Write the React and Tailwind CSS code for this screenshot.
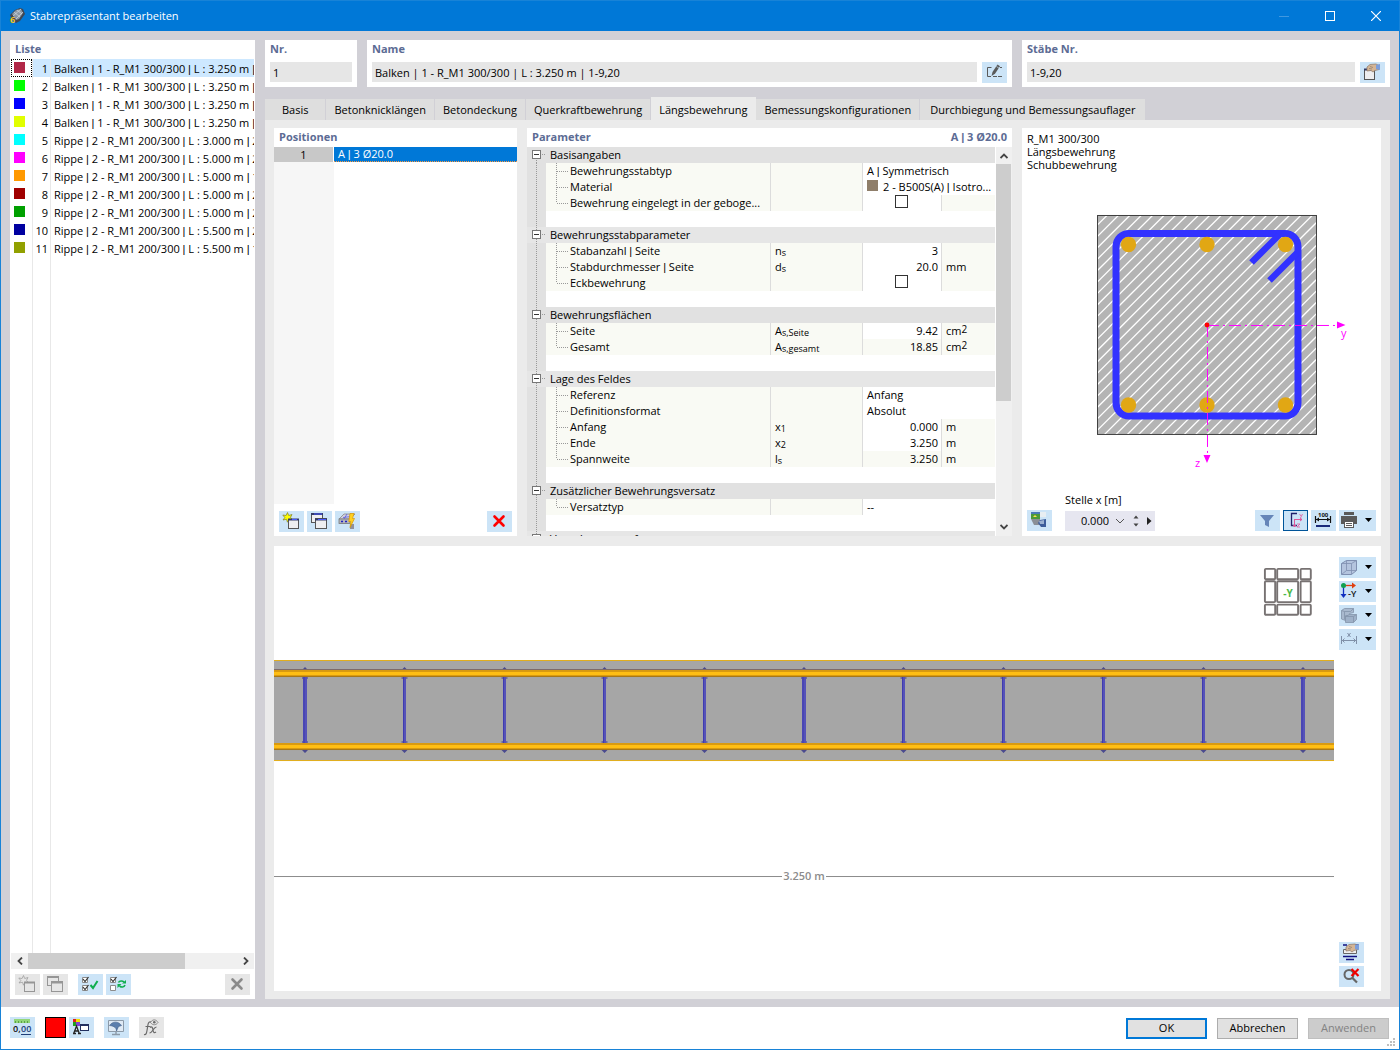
import clsx from 'clsx';

const listItems = [
  { nr: 1, color: '#b22748', text: 'Balken | 1 - R_M1 300/300 | L : 3.250 m | 1-9,20', active: true },
  { nr: 2, color: '#00ff00', text: 'Balken | 1 - R_M1 300/300 | L : 3.250 m | 10' },
  { nr: 3, color: '#0000ff', text: 'Balken | 1 - R_M1 300/300 | L : 3.250 m | 11' },
  { nr: 4, color: '#e1ff00', text: 'Balken | 1 - R_M1 300/300 | L : 3.250 m | 12' },
  { nr: 5, color: '#00ffff', text: 'Rippe | 2 - R_M1 200/300 | L : 3.000 m | 21' },
  { nr: 6, color: '#ff00ff', text: 'Rippe | 2 - R_M1 200/300 | L : 5.000 m | 22' },
  { nr: 7, color: '#ff9900', text: 'Rippe | 2 - R_M1 200/300 | L : 5.000 m | 13' },
  { nr: 8, color: '#a00000', text: 'Rippe | 2 - R_M1 200/300 | L : 5.000 m | 23' },
  { nr: 9, color: '#00a000', text: 'Rippe | 2 - R_M1 200/300 | L : 5.000 m | 24' },
  { nr: 10, color: '#0000a0', text: 'Rippe | 2 - R_M1 200/300 | L : 5.500 m | 25' },
  { nr: 11, color: '#91a000', text: 'Rippe | 2 - R_M1 200/300 | L : 5.500 m | 14' },
];

const tabs = [
  { name: 'Basis', className: 'px-[17px]' },
  { name: 'Betonknicklängen' },
  { name: 'Betondeckung' },
  { name: 'Querkraftbewehrung' },
  { name: 'Längsbewehrung', active: true },
  { name: 'Bemessungskonfigurationen' },
  { name: 'Durchbiegung und Bemessungsauflager', className: 'px-[10px]' },
];

const groups = [
  {
    title: 'Basisangaben',
    rows: [
      { label: 'Bewehrungsstabtyp', text: 'A | Symmetrisch' },
      { label: 'Material', text: '2 - B500S(A) | Isotro...', swatch: true },
      { label: 'Bewehrung eingelegt in der geboge...', check: true },
    ],
  },
  {
    title: 'Bewehrungsstabparameter',
    rows: [
      { label: 'Stabanzahl | Seite', symbol: ['n', 's'], value: '3' },
      { label: 'Stabdurchmesser | Seite', symbol: ['d', 's'], value: '20.0', unit: 'mm' },
      { label: 'Eckbewehrung', check: true },
    ],
  },
  {
    title: 'Bewehrungsflächen',
    rows: [
      { label: 'Seite', symbol: ['A', 's,Seite'], value: '9.42', unit: 'cm', square: true },
      { label: 'Gesamt', symbol: ['A', 's,gesamt'], value: '18.85', unit: 'cm', square: true, locked: true },
    ],
  },
  {
    title: 'Lage des Feldes',
    rows: [
      { label: 'Referenz', text: 'Anfang' },
      { label: 'Definitionsformat', text: 'Absolut' },
      { label: 'Anfang', symbol: ['x', '1'], value: '0.000', unit: 'm' },
      { label: 'Ende', symbol: ['x', '2'], value: '3.250', unit: 'm' },
      { label: 'Spannweite', symbol: ['l', 's'], value: '3.250', unit: 'm', locked: true },
    ],
  },
  {
    title: 'Zusätzlicher Bewehrungsversatz',
    rows: [{ label: 'Versatztyp', text: '--' }],
  },
  { title: 'Verankerungsanfang', rows: [] },
];

// Sets the separator bars in a face with a narrow bar
const Barred = ({ text }) =>
  text.split('|').map((part, i) => (
    <span key={i} className="whitespace-pre">
      {i > 0 && <span className="font-['Liberation_Sans',sans-serif]">|</span>}
      {part}
    </span>
  ));

const IconButton = ({ label, children, disabled, pressed }) => (
  <button
    type="button"
    aria-label={label}
    disabled={disabled}
    className={clsx(
      'flex h-[21px] w-[25px] shrink-0 items-center justify-center',
      disabled ? 'bg-[#e6e6e6]' : 'bg-[#cce4f7]',
      pressed && 'outline outline-1 -outline-offset-1 outline-[#005499]'
    )}
  >
    <svg width="25" height="21" viewBox="0 0 25 21" fill="none">
      {children}
    </svg>
  </button>
);

const MenuButton = ({ label, children }) => (
  <button type="button" aria-label={label} className="flex h-[21px] w-[37px] shrink-0 bg-[#cce4f7]">
    <svg width="37" height="21" viewBox="0 0 37 21" fill="none">
      {children}
      <path d="M26 8h7l-3.5 4z" fill="#000" />
    </svg>
  </button>
);

const NewIcon = ({ gray }) => (
  <>
    <path
      d="M8.500 1.500l1.200 3 3.300-1-1.500 2.800 1.800 2.200-3.300-.3-1.500 3-1-3-3.500.8 1.800-2.500-2-2.500 3.300.5z"
      fill={gray ? '#e6e6e6' : '#ffff00'}
      stroke={gray ? '#a0a0a0' : '#8a8a30'}
      strokeWidth=".8"
    />
    <rect x="9.500" y="8.500" width="10" height="9" fill={gray ? '#e6e6e6' : '#eeeef0'} stroke={gray ? '#969696' : '#555'} />
    <path d="M9 8.500h11" stroke={gray ? '#969696' : '#333a66'} strokeWidth="2" />
    {!gray && <path d="M13 8.500h5" stroke="#4a5bff" />}
  </>
);

const CopyIcon = ({ gray }) => (
  <>
    <rect x="4.500" y="2.500" width="11" height="9" fill={gray ? '#e6e6e6' : '#eeeef0'} stroke={gray ? '#969696' : '#555'} />
    <path d="M4 3h12" stroke={gray ? '#969696' : '#333a66'} strokeWidth="2" />
    {!gray && <path d="M7 3h8" stroke="#4a5bff" />}
    <rect x="8.500" y="7.500" width="11" height="10" fill={gray ? '#e6e6e6' : '#eeeef0'} stroke={gray ? '#969696' : '#555'} />
    <path d="M8 8.500h12" stroke={gray ? '#969696' : '#333a66'} strokeWidth="2" />
    {!gray && <path d="M11 8.500h8" stroke="#4a5bff" />}
  </>
);

const HandIcon = () => (
  <>
    <path d="M7 5l3-2.500 6-.5 3 1.500v4l-4 1-2 1.500-2-1.500-4 .5z" fill="#d5b595" stroke="#8a7768" strokeWidth=".7" />
    <path d="M10 4.500l3 1M9 6.500l3 .5" stroke="#8a7768" strokeWidth=".7" />
    <path d="M16 3l4-1v6l-4-1z" fill="#7c9edb" />
  </>
);

const AppLogo = () => (
  <svg width="16" height="16" viewBox="0 0 16 16">
    <path d="M1 7l5-5 5-2 3 1 2 5-5 7-4 2-4-3z" fill="#3f4752" />
    <path d="M3 6l4-4 5-1 2 4-4 6-3 1z" fill="#8b97a3" />
    <path d="M5 4l6 5M8 2l5 4M4 8l8-7M7 11l7-7" stroke="#d0d8e0" strokeWidth=".7" />
    <text x="1" y="15" fontSize="9" fontWeight="700" fill="#f2c220">6</text>
  </svg>
);

const TitleBar = () => (
  <header className="flex h-[30px] shrink-0 items-center bg-[#0078d7] pl-2 text-white">
    <AppLogo />
    <h1 className="ml-[5px] flex-1">Stabrepräsentant bearbeiten</h1>
    <button type="button" aria-label="Minimieren" className="flex h-full w-[46px] items-center justify-center">
      <svg width="10" height="10" viewBox="0 0 10 10"><path d="M0 5.500h10" stroke="#4098e0" /></svg>
    </button>
    <button type="button" aria-label="Maximieren" className="flex h-full w-[46px] items-center justify-center">
      <svg width="10" height="10" viewBox="0 0 10 10"><rect x=".5" y=".5" width="9" height="9" fill="none" stroke="#fff" /></svg>
    </button>
    <button type="button" aria-label="Schließen" className="flex h-full w-[46px] items-center justify-center">
      <svg width="10" height="10" viewBox="0 0 10 10"><path d="M0 0l10 10M10 0L0 10" stroke="#fff" strokeWidth="1.200" /></svg>
    </button>
  </header>
);

const PanelTitle = ({ children }) => <h2 className="h-[19px] px-[5px] font-bold leading-[18px] text-[#5c6b94]">{children}</h2>;

const ListPanel = () => (
  <section className="flex w-[245px] shrink-0 flex-col bg-white">
    <PanelTitle>Liste</PanelTitle>
    <div className="mx-px min-h-0 flex-1 overflow-hidden">
      <table className="h-full w-full table-fixed border-separate border-spacing-0">
        <colgroup>
          <col className="w-[22px]" />
          <col className="w-[18px]" />
          <col />
        </colgroup>
        <tbody>
          {listItems.map((item) => (
            <tr key={item.nr} className={clsx('h-[18px]', item.active && 'bg-[#cde8ff]')}>
              <td className={clsx('border-r border-[#e8e8e8] p-0', item.active && 'bg-white')}>
                <div className={clsx('flex h-[18px] items-start', item.active ? 'border border-dotted border-black pl-[2px] pt-[2px]' : 'pl-[3px] pt-[3px]')}>
                  <span className="size-[11px]" style={{ backgroundColor: item.color }}></span>
                </div>
              </td>
              <td className="border-r border-[#e8e8e8] p-0 pr-[2px] text-right leading-5">
                <div className="h-[18px]">{item.nr}</div>
              </td>
              <td className="overflow-hidden whitespace-nowrap p-0 pl-[3px] leading-5">
                <div className="h-[18px]"><Barred text={item.text} /></div>
              </td>
            </tr>
          ))}
          <tr>
            <td className="border-r border-[#e8e8e8]"></td>
            <td className="border-r border-[#e8e8e8]"></td>
            <td></td>
          </tr>
        </tbody>
      </table>
    </div>
    <div className="mx-px flex h-4 items-center bg-[#f0f0f0]">
      <button type="button" aria-label="Nach links" className="flex w-[17px] justify-center">
        <svg width="8" height="8" viewBox="0 0 8 8" fill="none"><path d="M6 .5L2.500 4 6 7.500" stroke="#444" strokeWidth="1.800" /></svg>
      </button>
      <div className="flex h-full flex-1">
        <div className="w-3/4 bg-[#cdcdcd]"></div>
      </div>
      <button type="button" aria-label="Nach rechts" className="flex w-[17px] justify-center">
        <svg width="8" height="8" viewBox="0 0 8 8" fill="none"><path d="M2 .5L5.500 4 2 7.500" stroke="#444" strokeWidth="1.800" /></svg>
      </button>
    </div>
    <div className="flex gap-[3px] px-[5px] pb-1 pt-[5px]">
      <IconButton label="Neu" disabled><NewIcon gray /></IconButton>
      <IconButton label="Kopieren" disabled><CopyIcon gray /></IconButton>
      <div className="w-1"></div>
      <IconButton label="Alle auswählen">
        <path d="M4.500 3.500h5v5h-5zM4.500 11.500h5v5h-5z" fill="#fff" stroke="#8c8c8c" />
        <path d="M5 5l2 2.500L10.500 3M5 13l2 2.500 3.500-4.500" stroke="#333" strokeWidth="1.200" />
        <path d="M12.500 11l2.500 3 4.500-7" stroke="#0fae4e" strokeWidth="2" />
      </IconButton>
      <IconButton label="Auswahl umkehren">
        <path d="M4.500 3.500h5v5h-5zM4.500 11.500h5v5h-5z" fill="#fff" stroke="#8c8c8c" />
        <path d="M5 5l2 2.500L10.500 3" stroke="#333" strokeWidth="1.200" />
        <path d="M12.500 8.500c1-2 4-2 5.500-.5M19 11c-1 2.500-3.500 2.500-5.500 1" stroke="#0fae4e" strokeWidth="1.600" />
        <path d="M20 6v3.500h-4zM11.500 14v-4h4z" fill="#0fae4e" />
      </IconButton>
      <div className="flex-1"></div>
      <IconButton label="Löschen" disabled>
        <path d="M7.500 5.500l9 9M16.500 5.500l-9 9" stroke="#8a8a8a" strokeWidth="2.600" strokeLinecap="round" />
      </IconButton>
    </div>
  </section>
);

const FieldCard = ({ id, label, value, className, children }) => (
  <div className={clsx('bg-white px-[5px] pb-1', className)}>
    <label htmlFor={id} className="block h-[22px] font-bold leading-[18px] text-[#5c6b94]">{label}</label>
    <div className="flex gap-[5px]">
      <input id={id} readOnly value={value} className="h-5 min-w-0 flex-1 bg-[#e6e6e6] px-[3px] outline-none" />
      {children}
    </div>
  </div>
);

const HeaderFields = () => (
  <div className="flex gap-[10px]">
    <FieldCard id="nr" label="Nr." value="1" className="w-[92px]" />
    <FieldCard id="name" label="Name" value="Balken | 1 - R_M1 300/300 | L : 3.250 m | 1-9,20" className="flex-1">
      <IconButton label="Name bearbeiten">
        <path d="M9.500 5.500H5.500v9H9M11 14.500h4M16 14.500h4M18 5.500h2" stroke="#5a5a5a" />
        <path d="M9.500 14l1-4 5-7.500 2.500 1.700-5 7.500z" fill="#5a5a5a" />
        <path d="M14.500 4.500l2.500 1.700" stroke="#cce4f7" strokeWidth=".7" />
      </IconButton>
    </FieldCard>
    <FieldCard id="staebe" label="Stäbe Nr." value="1-9,20" className="w-[368px]">
      <IconButton label="Stäbe auswählen">
        <rect x="4.500" y="7.500" width="10" height="10" fill="#eeeef0" stroke="#555" />
        <path d="M4 7.500h11" stroke="#333a66" strokeWidth="2" />
        <HandIcon />
      </IconButton>
    </FieldCard>
  </div>
);

const TabBar = () => (
  <div role="tablist" className="flex h-[23px] items-end">
    {tabs.map((tab) => (
      <button
        key={tab.name}
        type="button"
        role="tab"
        aria-selected={!!tab.active}
        className={clsx(
          'whitespace-nowrap border-r',
          tab.className || 'px-2',
          tab.active ? 'h-[23px] border-[#ebebeb] bg-[#ebebeb] pt-1' : 'h-[21px] border-[#d1d0d6] bg-[#dedede] pt-[2px]'
        )}
      >
        {tab.name}
      </button>
    ))}
  </div>
);

const PositionsPanel = () => (
  <section className="flex w-[243px] shrink-0 flex-col bg-white">
    <PanelTitle>Positionen</PanelTitle>
    <div className="min-h-0 flex-1">
      <table className="h-full w-full table-fixed border-separate border-spacing-0">
        <colgroup>
          <col className="w-[60px]" />
          <col />
        </colgroup>
        <tbody>
          <tr className="h-[14px]">
            <td className="border-r border-white bg-[#c8c8c8] p-0 text-center leading-[14px]">1</td>
            <td className="border-b border-dotted border-[#ff9a3c] bg-[#0078d7] p-0 pl-1 leading-[13px] text-white">
              <Barred text="A | 3 Ø20.0" />
            </td>
          </tr>
          <tr>
            <td className="bg-[#f6f6f6]"></td>
            <td></td>
          </tr>
        </tbody>
      </table>
    </div>
    <div className="flex gap-[3px] px-[5px] pb-1 pt-[7px]">
      <IconButton label="Neue Position"><NewIcon /></IconButton>
      <IconButton label="Position kopieren"><CopyIcon /></IconButton>
      <IconButton label="Aus Querschnitt übernehmen">
        <path d="M4 8l5-5h11l-5 5z" fill="#d0d0e0" stroke="#888" strokeWidth=".8" />
        <path d="M8 6.500l8-1M12 3l-3 5" stroke="#5b5be0" strokeWidth=".8" />
        <rect x="4" y="8" width="11" height="4.500" fill="#b5b5bd" stroke="#777" strokeWidth=".8" />
        <path d="M6 10.500h2M10 10.500h2" stroke="#2222c0" strokeWidth="1.500" />
        <path d="M15 13h4v5h-4z" fill="#90909a" />
        <path d="M15 2.500h4l-1.500 5h2l-4.500 9 .8-6h-2z" fill="#ffd020" stroke="#d99a00" strokeWidth=".7" />
      </IconButton>
      <div className="flex-1"></div>
      <IconButton label="Position löschen">
        <path d="M7.500 5.500l9 9M16.500 5.500l-9 9" stroke="#ff0000" strokeWidth="2.600" strokeLinecap="round" />
      </IconButton>
    </div>
  </section>
);

const GutterLine = () => (
  <svg className="block" width="19" height="16" viewBox="0 0 19 16">
    <path d="M9.500 0v16" stroke="#999" strokeDasharray="1 1" />
  </svg>
);

const GroupHeader = ({ title, first, tone }) => (
  <tr className={clsx('h-4', tone)}>
    <td className="p-0">
      <button type="button" aria-label={`${title} einklappen`} className="block h-4 w-[19px]">
        <svg className="block" width="19" height="16" viewBox="0 0 19 16">
          <path d={first ? 'M9.500 13v3' : 'M9.500 0v16'} stroke="#999" strokeDasharray="1 1" />
          <path d="M15 7.500h4" stroke="#999" strokeDasharray="1 1" />
          <rect x="5.500" y="3.500" width="8" height="8" fill="#fff" stroke="#777" />
          <path d="M7 7.500h5" stroke="#333" />
        </svg>
      </button>
    </td>
    <td colSpan={4} className="p-0 pl-1 text-left leading-4">{title}</td>
  </tr>
);

const ParameterRow = ({ row, last }) => (
  <tr className="h-4">
    <td className="bg-[#e1e1e1] p-0"><GutterLine /></td>
    <td className="border-r border-[#dcdcdc] bg-[#f9faf4] p-0">
      <div className="flex h-4">
        <svg className="shrink-0" width="24" height="16" viewBox="0 0 24 16">
          <path d={last ? 'M10.500 0v8M11 8.500h11' : 'M10.500 0v16M11 8.500h11'} stroke="#999" strokeDasharray="1 1" />
        </svg>
        <span className="whitespace-nowrap leading-4"><Barred text={row.label} /></span>
      </div>
    </td>
    <td className="border-r border-[#dcdcdc] bg-[#f9faf4] p-0 pl-1 leading-4">
      {row.symbol && (
        <div className="flex h-4">
          {row.symbol[0]}
          <span className="pt-[2px] text-[9px] leading-4">{row.symbol[1]}</span>
        </div>
      )}
    </td>
    {row.text ? (
      <td colSpan={2} className="p-0 pl-1 leading-4">
        <div className="flex h-4 gap-[5px] whitespace-nowrap">
          {row.swatch && <span className="mt-px size-[11px] bg-[#8f7e6a]"></span>}
          <span><Barred text={row.text} /></span>
        </div>
      </td>
    ) : (
      <>
        <td className={clsx('border-r border-[#dcdcdc] p-0 text-right leading-4', row.locked && 'bg-[#f9faf4]')}>
          {row.check ? (
            <div className="flex h-4 justify-center">
              <input type="checkbox" aria-label={row.label} className="size-[13px] appearance-none border border-[#333] bg-white" />
            </div>
          ) : (
            <span className="pr-[3px]">{row.value}</span>
          )}
        </td>
        <td className="bg-[#f9faf4] p-0 pl-1">
          <div className="flex h-4 leading-4">
            {row.unit}
            {row.square && <span className="text-[10px] leading-3">2</span>}
          </div>
        </td>
      </>
    )}
  </tr>
);

const ParameterPanel = () => (
  <section className="flex min-w-0 flex-1 flex-col bg-white">
    <div className="flex justify-between">
      <PanelTitle>Parameter</PanelTitle>
      <PanelTitle><Barred text="A | 3 Ø20.0" /></PanelTitle>
    </div>
    <div className="flex min-h-0 flex-1">
      <div className="min-w-0 flex-1 overflow-hidden">
        <table className="w-full table-fixed border-separate border-spacing-0">
          <colgroup>
            <col className="w-[19px]" />
            <col />
            <col className="w-[92px]" />
            <col className="w-[79px]" />
            <col className="w-[53px]" />
          </colgroup>
          {groups.map((group, i) => (
            <tbody key={group.title}>
              <GroupHeader title={group.title} first={i === 0} tone={i % 2 ? 'bg-[#e6e6e6]' : 'bg-[#e1e1e1]'} />
              {group.rows.map((row, j) => (
                <ParameterRow key={row.label} row={row} last={j === group.rows.length - 1} />
              ))}
              <tr className="h-4">
                <td className="bg-[#e1e1e1] p-0"><GutterLine /></td>
                <td colSpan={4}></td>
              </tr>
            </tbody>
          ))}
        </table>
      </div>
      <div className="ml-px flex w-4 flex-col bg-[#f0f0f0]">
        <button type="button" aria-label="Nach oben" className="flex h-[17px] items-center justify-center">
          <svg width="8" height="8" viewBox="0 0 8 8" fill="none"><path d="M.5 6L4 2.500 7.500 6" stroke="#444" strokeWidth="1.800" /></svg>
        </button>
        <div className="flex-1">
          <div className="mr-px h-2/3 bg-[#cdcdcd]"></div>
        </div>
        <button type="button" aria-label="Nach unten" className="flex h-[17px] items-center justify-center">
          <svg width="8" height="8" viewBox="0 0 8 8" fill="none"><path d="M.5 2L4 5.500 7.500 2" stroke="#444" strokeWidth="1.800" /></svg>
        </button>
      </div>
    </div>
  </section>
);

const hatchLines = Array.from({ length: 39 }, (_, i) => 11.4 * (i + 1) - 1);

const SectionDrawing = () => (
  <svg className="min-h-0 w-full flex-1" viewBox="0 0 359 320" fill="none">
    <defs>
      <clipPath id="section"><rect x="75" y="43" width="220" height="220" /></clipPath>
    </defs>
    <rect x="75.500" y="43.500" width="219" height="219" fill="#b4b4b4" />
    <g clipPath="url(#section)" stroke="#fff" strokeWidth="1.300">
      {hatchLines.map((d) => (
        <path key={d} d={`M75 ${43 + d}L${75 + d} 43`} />
      ))}
    </g>
    <rect x="75.500" y="43.500" width="219" height="219" stroke="#404040" />
    <rect x="94" y="61.500" width="182" height="182.500" rx="13" stroke="#3232ff" strokeWidth="7" />
    <path d="M229.500 90.500L257 63M247.500 108.500L275 81" stroke="#3232ff" strokeWidth="6.500" />
    {[106.5, 185, 263.5].map((x) => (
      <g key={x} fill="#e1a714">
        <circle cx={x} cy="72.500" r="7.700" />
        <circle cx={x} cy="233" r="7.700" />
      </g>
    ))}
    <path d="M185 153.500h130" stroke="#ff00ff" strokeDasharray="12 4 2 4" />
    <path d="M185.500 153v130" stroke="#ff00ff" strokeDasharray="12 4 2 4" />
    <path d="M315 149.500l8.500 3.500-8.500 3.500zM181.500 283h7l-3.500 8z" fill="#ff00ff" />
    <circle cx="185" cy="153" r="2.400" fill="#ff0000" />
    <text x="319" y="165" fontSize="11" fill="#ff00ff">y</text>
    <text x="173" y="295" fontSize="11" fill="#ff00ff">z</text>
  </svg>
);

const SectionPanel = () => (
  <section className="flex w-[359px] shrink-0 flex-col bg-white pb-[5px]">
    <div className="px-[5px] pb-px pt-1 leading-[13px]">
      <p>R_M1 300/300</p>
      <p>Längsbewehrung</p>
      <p>Schubbewehrung</p>
    </div>
    <SectionDrawing />
    <div className="flex items-end px-[5px]">
      <IconButton label="Rendering">
        <rect x="4" y="2" width="9" height="7" fill="#4a9a3a" />
        <path d="M4 2h9v2H4z" fill="#4a7ab8" />
        <path d="M6 7l2-2 2 2z" fill="#ffe14a" />
        <path d="M13 2h6v5h-6z" fill="#e8eef2" />
        <path d="M4 9h9v6H7z" fill="#8a8f96" />
        <path d="M13 10l6-1v8h-5l-3-4z" fill="#3c5c9a" />
        <path d="M12 11l5-1v4h-4z" fill="#9ab0d0" />
      </IconButton>
      <div className="ml-[13px] flex flex-col">
        <label htmlFor="stelle" className="h-[19px] leading-4">Stelle x [m]</label>
        <div className="flex h-5 w-[90px] items-center bg-[#e6e6f0] pt-px">
          <input id="stelle" defaultValue="0.000" className="w-11 bg-transparent text-right outline-none" />
          <button type="button" aria-label="Werte" className="ml-[6px]">
            <svg width="10" height="10" viewBox="0 0 10 10" fill="none"><path d="M1 3l4 4 4-4" stroke="#555" /></svg>
          </button>
          <button type="button" aria-label="Wert ändern" className="ml-2">
            <svg width="6" height="14" viewBox="0 0 6 14"><path d="M.5 4.500h5L3 1.500zM.5 9.500h5L3 12.500z" fill="#444" /></svg>
          </button>
          <button type="button" aria-label="Weiter" className="ml-2">
            <svg width="5" height="8" viewBox="0 0 5 8"><path d="M0 0v8l4.500-4z" fill="#222" /></svg>
          </button>
        </div>
      </div>
      <div className="flex flex-1 justify-end gap-[3px]">
        <IconButton label="Filter">
          <path d="M5 5h14l-5 6v6l-4-2v-4z" fill="#6685b8" />
        </IconButton>
        <IconButton label="Achsen" pressed>
          <path d="M14 3.500H8.500v12H14" stroke="#20206a" strokeWidth="1.300" />
          <path d="M11 9.500h8M11.500 9v8M17 8l2 1.500-2 1.500M10 15l1.500 2 1.500-2" stroke="#e0559a" />
          <path d="M16.500 4l1.500 2M19.500 4l-2 4M14 14h3l-3 3h3" stroke="#e0559a" strokeWidth=".8" />
        </IconButton>
        <IconButton label="Bemaßung">
          <text x="7" y="7" fontSize="6" fontWeight="700" fill="#111">100</text>
          <path d="M4 9.500h16M4.500 6v7M19.500 6v7" stroke="#111" strokeWidth="1.200" />
          <path d="M5 9.500l3-2v4zM19 9.500l-3-2v4z" fill="#111" />
          <path d="M5 16h14" stroke="#1a2a7a" strokeWidth="2" />
        </IconButton>
        <MenuButton label="Drucken">
          <path d="M5 2h10v3H5zM2 6h16v8h-3v-3H5v3H2z" fill="#5a5a5a" />
          <rect x="5.500" y="11.500" width="9" height="6" fill="#fff" stroke="#5a5a5a" />
          <path d="M7 13.500h6M7 15.500h6" stroke="#5a5a5a" />
        </MenuButton>
      </div>
    </div>
  </section>
);

const stirrups = [31, 130.5, 230.5, 330.5, 430.5, 530, 629.5, 729.5, 829.5, 929.5, 1029];

const BeamDrawing = () => (
  <svg className="h-full w-full" viewBox="0 0 1060 445" fill="none">
    <rect x="0" y="114" width="1060" height="101" fill="#a6a6a6" />
    <path d="M0 114.500h1060M0 214.500h1060" stroke="#e2ae1c" />
    {stirrups.map((x, i) => (
      <g key={x}>
        <path d={`M${x - 3} 124l3-3 3 3zM${x - 3} 204l3 3 3-3z`} fill="#4a4a90" />
        <path d={`M${x - 3} 131h6v2h-6zM${x - 3} 195h6v2h-6z`} fill="#6d6da0" />
        <path d={`M${x} 130v67`} stroke="#5552b8" strokeWidth={i % 5 === 0 ? 4 : 3} />
        <path d={`M${x - 1} 130v67`} stroke="#3f3bb0" />
      </g>
    ))}
    {[124, 197].map((y) => (
      <g key={y}>
        <path d={`M0 ${y + 3.5}h1060`} stroke="#d99a10" strokeWidth="7" />
        <path d={`M0 ${y + 3.5}h1060`} stroke="#ffbe14" strokeWidth="3" />
        <path d={`M0 ${y + 6.5}h1060`} stroke="#a87818" />
      </g>
    ))}
    <path d="M0 123.500h1060" stroke="#7d6a68" />
    <path d="M0 330.500h508M552 330.500h508" stroke="#8c8c8c" />
    <text x="530" y="334" textAnchor="middle" fontSize="11" fontWeight="600" fill="#8c8c8c">3.250 m</text>
  </svg>
);

// [offset, size] of the three bands of the navigation cube
const cubeBands = [[1.9, 10.3], [14.2, 20.9], [37.6, 10.2]];

const NavCube = () => (
  <button type="button" aria-label="Ansicht -Y" className="absolute right-[21px] top-[21px]">
    <svg width="50" height="50" viewBox="0 0 50 50" fill="#fff" stroke="#777272" strokeWidth="1.900">
      {cubeBands.map(([x, w]) => cubeBands.map(([y, h]) => <rect key={`${x}-${y}`} x={x} y={y} width={w} height={h} rx="1" />))}
      <text x="25" y="30" textAnchor="middle" fontSize="10" fontWeight="700" fill="#4cb848" stroke="none">-Y</text>
    </svg>
  </button>
);

const BeamPanel = () => (
  <section className="flex min-h-0 flex-[12] bg-white">
    <div className="relative min-w-0 flex-1">
      <BeamDrawing />
      <NavCube />
    </div>
    <div className="flex w-[47px] flex-col items-start gap-[3px] px-[5px] pb-1 pt-[11px]">
      <MenuButton label="Darstellung">
        <path d="M2.500 6.500l5-3h10v10l-5 4h-10z" fill="#b4c4de" stroke="#7f8fb0" />
        <path d="M2.500 6.500h10v11M12.500 6.500l5-3M7.500 3.500v10h10M2.500 17.500l5-4" stroke="#7f8fb0" strokeWidth=".8" />
      </MenuButton>
      <MenuButton label="Ansicht">
        <path d="M5 4.500h10" stroke="#e04010" strokeWidth="1.300" />
        <path d="M13 1.500l4 3-4 3z" fill="#e04010" />
        <path d="M4.500 5v9" stroke="#1030c0" strokeWidth="1.300" />
        <path d="M1.500 13l3 4 3-4z" fill="#1030c0" />
        <circle cx="4.500" cy="4.500" r="2.500" fill="#10a050" />
        <text x="9" y="16" fontSize="9" fontWeight="600" fill="#111">-Y</text>
      </MenuButton>
      <MenuButton label="Bauteile">
        <path d="M2.500 5.500l3-2h9v4l-4 1v2h-4v5l-4-1.500z" fill="#a9b9ce" stroke="#8393aa" strokeWidth=".8" />
        <path d="M2.500 5.500l3 1h6l3-3M5.500 6.500v8" stroke="#8393aa" strokeWidth=".8" />
        <path d="M6.500 11.500l4-2h7v5l-3 3h-8z" fill="#9fb1c8" stroke="#8393aa" strokeWidth=".8" />
        <path d="M6.500 11.500h8v6M14.500 11.500l3-2" stroke="#8393aa" strokeWidth=".8" />
      </MenuButton>
      <MenuButton label="Maße">
        <path d="M2.500 7v8M17.500 7v8M3 11.500h14M5.500 9.500l-2 2 2 2M14.500 9.500l2 2-2 2" stroke="#8090a8" />
        <path d="M8.500 4l3 4M11.500 4l-3 4" stroke="#8090a8" />
      </MenuButton>
      <div className="flex-1"></div>
      <IconButton label="Ergebnisse">
        <path d="M4 3h4M15 3h5M4 14.500h14M7 17.500h8" stroke="#101080" strokeWidth="1.300" />
        <path d="M4.500 7.500h13v4h-13z" fill="#eee" stroke="#666" />
        <HandIcon />
      </IconButton>
      <IconButton label="Zoom zurücksetzen">
        <circle cx="10" cy="8.500" r="4.500" stroke="#666" strokeWidth="2" />
        <path d="M13 11.500l5 5" stroke="#666" strokeWidth="2.200" />
        <path d="M12.500 3l7 7M19.500 3l-7 7" stroke="#f00000" strokeWidth="2.200" />
      </IconButton>
    </div>
  </section>
);

const Footer = () => (
  <footer className="flex h-[42px] shrink-0 items-start bg-white pl-[9px] pr-[10px]">
    <div className="flex flex-1 pt-[10px]">
      <IconButton label="Einheiten">
        <rect x="4" y="2" width="16" height="4" fill="#92d67a" />
        <path d="M5.500 4v2M8.500 4v2M11.500 4v2M14.500 4v2M17.500 4v2" stroke="#5aa048" />
        <text x="3" y="15" fontSize="9" fontWeight="600" fill="#111">0,</text>
        <text x="11" y="15" fontSize="9" fontWeight="600" fill="#20407a">00</text>
        <path d="M11 17.500h10" stroke="#20407a" />
      </IconButton>
      <button type="button" aria-label="Farbe" className="ml-[10px] h-[21px] w-[21px] border border-black bg-[#ff0000]"></button>
      <div className="ml-[3px] mr-[10px]">
        <IconButton label="Anzeigefarben">
          <path d="M4 2h3v3H4z" fill="#e02020" />
          <path d="M7 2h4v3H7z" fill="#f0e000" />
          <path d="M4 5h3v4H4z" fill="#20a020" />
          <path d="M7 5h4v4H7z" fill="#8040d0" />
          <path d="M4.500 17l3-8 3 8M5.500 14h4M4 16.500h3M9 16.500h3" stroke="#222" strokeWidth="1.300" />
          <rect x="11.500" y="7.500" width="8" height="6" fill="#fff" stroke="#223060" />
          <path d="M11 8h9" stroke="#223060" strokeWidth="2" />
        </IconButton>
      </div>
      <IconButton label="Anzeige">
        <path d="M4.500 3.500h15v11h-15z" fill="#dfeaf5" stroke="#8c9aa8" />
        <path d="M12 15v2M8 17.500h8" stroke="#8c9aa8" strokeWidth="1.400" />
        <path d="M5.500 8.500c3-4.500 9-4.500 12 0l-3 1-2 4.500c0-3-2-5-7-5.500z" fill="#5b7fae" stroke="#3d5c86" strokeWidth=".6" />
      </IconButton>
      <div className="w-[10px]"></div>
      <IconButton label="Formel" disabled>
        <path d="M5 17.500c2 .5 2.500-1 3-4l1-6c.4-2 1-3 3-2.500M6.500 9.500h5" stroke="#6a6a6a" strokeWidth="1.200" />
        <path d="M11 10.500c2-1.500 2.500 0 3 2.500s1 3.500 3 2M17.500 10c-3 0-4 6-7 6" stroke="#6a6a6a" strokeWidth="1.200" />
        <path d="M11.500 5.500c2-3.500 5.500-3.500 7.500 0-2 3-5.500 3-7.500 0z" stroke="#808080" strokeWidth=".9" />
        <circle cx="15.300" cy="5.300" r="1.300" fill="#6a6a6a" />
      </IconButton>
    </div>
    <div className="flex gap-[10px] pt-[11px]">
      <button type="button" className="h-[21px] w-[81px] border-2 border-[#0078d7] bg-[#e1e1e1]">OK</button>
      <button type="button" className="h-[21px] w-[81px] border border-[#adadad] bg-[#e1e1e1]">Abbrechen</button>
      <button type="button" disabled className="h-[21px] w-[81px] border border-[#bfbfbf] bg-[#cccccc] text-[#838383]">Anwenden</button>
    </div>
  </footer>
);

const ResizeGrip = () => (
  <svg className="absolute bottom-[2px] right-[3px]" width="9" height="9" viewBox="0 0 9 9" fill="#bfbfbf">
    <path d="M6 0h2v2H6zM3 3h2v2H3zM6 3h2v2H6zM0 6h2v2H0zM3 6h2v2H3zM6 6h2v2H6z" />
  </svg>
);

const App = () => (
  <div className="relative flex h-screen min-h-[700px] flex-col border border-[#1883d7] bg-[#d1d0d6] font-['Open_Sans','Noto_Sans',sans-serif] text-[11px] text-black">
    <TitleBar />
    <main className="flex min-h-0 flex-1 gap-[10px] px-[9px] pb-2 pt-[9px]">
      <ListPanel />
      <div className="flex min-w-0 flex-1 flex-col">
        <HeaderFields />
        <div className="h-[10px] shrink-0"></div>
        <TabBar />
        <div role="tabpanel" className="flex min-h-0 flex-1 flex-col gap-[10px] bg-[#ebebeb] px-[9px] pb-2 pt-2">
          <div className="flex min-h-0 flex-[11] gap-[10px]">
            <PositionsPanel />
            <ParameterPanel />
            <SectionPanel />
          </div>
          <BeamPanel />
        </div>
      </div>
    </main>
    <Footer />
    <ResizeGrip />
  </div>
);

export default App;
